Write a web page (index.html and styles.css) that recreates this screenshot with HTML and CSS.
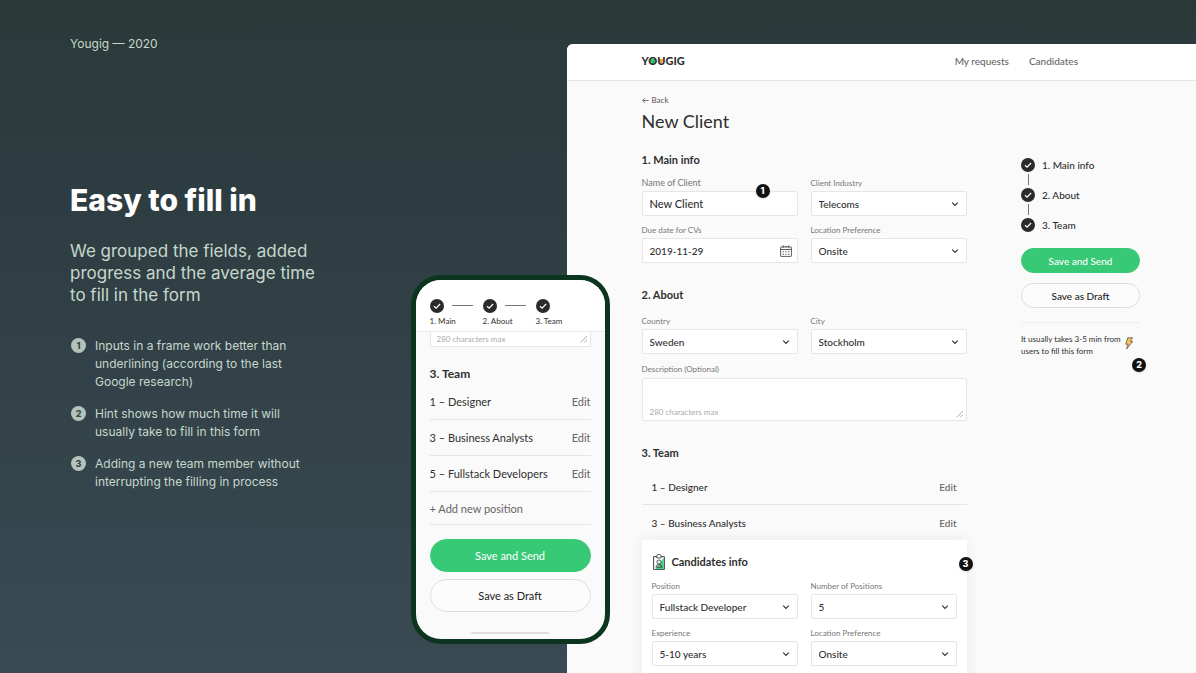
FILE: index.html
```html
<!DOCTYPE html>
<html lang="en">
<head>
<meta charset="utf-8">
<title>Yougig — Easy to fill in</title>
<link rel="stylesheet" href="styles.css">
</head>
<body>
<svg class="defs" aria-hidden="true">
  <symbol id="check" viewBox="0 0 14 14"><circle cx="7" cy="7" r="7" fill="#2b2b2b"/><path d="M4 7.2 6.1 9.2 10.1 5" fill="none" stroke="#fff" stroke-width="1.2"/></symbol>
  <symbol id="chevron" viewBox="0 0 8 8"><path d="M1.2 2.6 4 5.4 6.8 2.6" fill="none" stroke="#333" stroke-width="1.2"/></symbol>
  <symbol id="grip" viewBox="0 0 8 8"><path d="M.7 7.3 7 1M4.2 7.3 7 4.5" fill="none" stroke="#999" stroke-width=".8"/></symbol>
</svg>
<div class="stage">
  <section class="story">
    <p class="project">Yougig — 2020</p>
    <h1 class="headline">Easy to fill in</h1>
    <p class="lead">We grouped the fields, added<br>progress and the average time<br>to fill in the form</p>
    <ol class="notes">
      <li class="note"><span class="note-mark">1</span><span>Inputs in a frame work better than<br>underlining (according to the last<br>Google research)</span></li>
      <li class="note"><span class="note-mark">2</span><span>Hint shows how much time it will<br>usually take to fill in this form</span></li>
      <li class="note"><span class="note-mark">3</span><span>Adding a new team member without<br>interrupting the filling in process</span></li>
    </ol>
  </section>

  <div class="app">
    <header class="topbar">
      <div class="logo">Y<span class="logo-o">O</span><span class="logo-u">U</span>GIG</div>
      <nav class="nav"><a href="#requests">My requests</a><a href="#candidates">Candidates</a></nav>
    </header>
    <div class="columns">
      <main class="form">
        <a class="back" href="#back"><svg viewBox="0 0 8 8" width="7" height="7"><path d="M7.6 4H.8M3.6 1.2.8 4l2.8 2.8" fill="none" stroke="#555" stroke-width=".9"/></svg>Back</a>
        <h2 class="page-title">New Client</h2>

        <h3 class="section-title">1. Main info</h3>
        <div class="fields main-fields">
          <div class="field">
            <label class="label label-active" for="name">Name of Client</label>
            <input class="control control-active" id="name" type="text" value="New Client">
            <span class="badge badge-name">1</span>
          </div>
          <div class="field">
            <label class="label" for="industry">Client Industry</label>
            <div class="picker"><select class="control" id="industry"><option>Telecoms</option></select><svg class="chevron"><use href="#chevron"/></svg></div>
          </div>
          <div class="field">
            <label class="label" for="due">Due date for CVs</label>
            <div class="picker"><input class="control" id="due" type="text" value="2019-11-29">
              <svg class="calendar" viewBox="0 0 12 12"><path d="M1.2 1.9h9.6q.6 0 .6.6v8.300q0 .6-.6.6H1.200q-.6 0-.6-.6V2.500q0-.6.6-.6zM.6 4.500h10.800M3.200.4v2.400M8.800.4v2.400M6 .8v1.600" fill="none" stroke="#333" stroke-width=".8"/><path d="M2.600 6.800h7M2.600 9.200h7" fill="none" stroke="#333" stroke-width="1.100" stroke-dasharray="1.100 1.700"/></svg></div>
          </div>
          <div class="field">
            <label class="label" for="location">Location Preference</label>
            <div class="picker"><select class="control" id="location"><option>Onsite</option></select><svg class="chevron"><use href="#chevron"/></svg></div>
          </div>
        </div>

        <h3 class="section-title">2. About</h3>
        <div class="fields about-fields">
          <div class="field">
            <label class="label" for="country">Country</label>
            <div class="picker"><select class="control" id="country"><option>Sweden</option></select><svg class="chevron"><use href="#chevron"/></svg></div>
          </div>
          <div class="field">
            <label class="label" for="city">City</label>
            <div class="picker"><select class="control" id="city"><option>Stockholm</option></select><svg class="chevron"><use href="#chevron"/></svg></div>
          </div>
          <div class="field field-wide">
            <label class="label" for="description">Description (Optional)</label>
            <div class="picker"><textarea class="control area" id="description" placeholder="280 characters max"></textarea><svg class="grip"><use href="#grip"/></svg></div>
          </div>
        </div>

        <h3 class="section-title">3. Team</h3>
        <ul class="team">
          <li class="member"><span>1 – Designer</span><button class="edit" type="button">Edit</button></li>
          <li class="member"><span>3 – Business Analysts</span><button class="edit" type="button">Edit</button></li>
        </ul>
        <section class="card">
          <h4 class="card-title">
            <svg viewBox="0 0 12 16" width="12" height="16"><path d="M.6 2.600h10.800v12.800H.6z" fill="#fff" stroke="#444"/><path d="M10.900 3.500v11.400H2.500z" fill="#4fd08a"/><path d="M3.800 1.800Q4 .5 6 .5t2.200 1.300v2.100H3.800z" fill="#fff" stroke="#444" stroke-width=".9"/><circle cx="6" cy="8" r="2.100" fill="#dff5e8" stroke="#333" stroke-width=".8"/><path d="M2.800 13.200q.2-2.700 3.200-2.700t3.200 2.700z" fill="none" stroke="#333" stroke-width=".8"/></svg>
            Candidates info
          </h4>
          <span class="badge badge-card">3</span>
          <div class="fields">
            <div class="field">
              <label class="label" for="position">Position</label>
              <div class="picker"><select class="control" id="position"><option>Fullstack Developer</option></select><svg class="chevron"><use href="#chevron"/></svg></div>
            </div>
            <div class="field">
              <label class="label" for="count">Number of Positions</label>
              <div class="picker"><select class="control" id="count"><option>5</option></select><svg class="chevron"><use href="#chevron"/></svg></div>
            </div>
            <div class="field">
              <label class="label" for="experience">Experience</label>
              <div class="picker"><select class="control" id="experience"><option>5-10 years</option></select><svg class="chevron"><use href="#chevron"/></svg></div>
            </div>
            <div class="field">
              <label class="label" for="place">Location Preference</label>
              <div class="picker"><select class="control" id="place"><option>Onsite</option></select><svg class="chevron"><use href="#chevron"/></svg></div>
            </div>
          </div>
        </section>
      </main>

      <aside class="side">
        <ol class="steps">
          <li class="step"><svg class="check"><use href="#check"/></svg>1. Main info</li>
          <li class="step-line"></li>
          <li class="step"><svg class="check"><use href="#check"/></svg>2. About</li>
          <li class="step-line"></li>
          <li class="step"><svg class="check"><use href="#check"/></svg>3. Team</li>
        </ol>
        <button class="pill pill-primary" type="button">Save and Send</button>
        <button class="pill" type="button">Save as Draft</button>
        <div class="hint">
          <p>It usually takes 3-5 min from<br>users to fill this form</p>
          <svg viewBox="0 0 10 13" width="10" height="13"><path d="M3.800.8h4.700L6.500 4.600h2.100L2.600 12l1.500-4.800H1.700z" fill="#ffc04f" stroke="#555" stroke-width=".8" stroke-linejoin="round"/></svg>
          <span class="badge badge-hint">2</span>
        </div>
      </aside>
    </div>

    <div class="phone">
      <ol class="tabs">
        <li class="tab"><svg class="check"><use href="#check"/></svg>1. Main</li>
        <li class="tab"><svg class="check"><use href="#check"/></svg>2. About</li>
        <li class="tab"><svg class="check"><use href="#check"/></svg>3. Team</li>
      </ol>
      <div class="phone-body">
        <div class="area-end"><span>280 characters max</span><svg class="area-grip"><use href="#grip"/></svg></div>
        <h3 class="section-title phone-title">3. Team</h3>
        <ul class="phone-team">
          <li class="phone-member"><span>1 – Designer</span><button class="edit" type="button">Edit</button></li>
          <li class="phone-member"><span>3 – Business Analysts</span><button class="edit" type="button">Edit</button></li>
          <li class="phone-member"><span>5 – Fullstack Developers</span><button class="edit" type="button">Edit</button></li>
          <li class="phone-member phone-add"><button class="edit" type="button">+ Add new position</button></li>
        </ul>
        <button class="pill pill-phone pill-primary" type="button">Save and Send</button>
        <button class="pill pill-phone" type="button">Save as Draft</button>
        <div class="home-bar"></div>
      </div>
    </div>
  </div>
</div>
</body>
</html>
```
FILE: styles.css
```css
* { box-sizing: border-box; margin: 0; padding: 0; }
ol, ul { list-style: none; }
a { color: inherit; text-decoration: none; }
button, input, select, textarea { font: inherit; color: inherit; }
body { font-family: Lato, "Liberation Sans", sans-serif; font-weight: 500; color: #2f2f2f; font-size: 10px; }
.defs { position: absolute; width: 0; height: 0; }

.stage {
  display: grid;
  grid-template-columns: 90fr 100fr;
  height: 100vh;
  overflow: hidden;
  background: linear-gradient(#2a3938, #2d3c40 25%, #3a4a53);
}

/* Presentation copy */
.story { padding: 36px 0 0 70px; font-family: Inter, "Liberation Sans", sans-serif; font-weight: 400; color: #c6d8cd; }
.project { font-size: 12px; line-height: 16px; }
.headline { margin-top: 128px; font-size: 30px; line-height: 40px; font-weight: 800; color: #fff; }
.lead { margin-top: 20px; font-size: 17px; line-height: 22px; }
.notes { display: grid; gap: 14px; margin-top: 31px; }
.note { display: flex; gap: 9px; padding-left: 1px; font-size: 12px; line-height: 18px; }
.note-mark {
  width: 15px; height: 15px; margin-top: 1px;
  border-radius: 50%; background: #b3c3bb; color: #36464c;
  font-size: 9px; line-height: 15px; font-weight: 800; text-align: center;
}

/* Desktop window */
.app { position: relative; display: flex; flex-direction: column; margin-top: 44px; background: #fafafa; border-radius: 6px 0 0 0; }
.topbar {
  display: flex; justify-content: space-between; align-items: center;
  height: 37px; padding: 0 118px 2px 75px;
  background: #fff; border-bottom: 1px solid #e6e6e6; border-radius: 6px 0 0 0;
}
.logo { font-size: 11px; line-height: 16px; font-weight: 900; }
.logo-o { background: radial-gradient(circle at 50% 58%, #2fc873 3px, transparent 3px); }
.logo-u { background: radial-gradient(circle at 50% 52%, #f9a52b 2px, transparent 2px); }
.nav { display: flex; gap: 20px; font-size: 10px; color: #666; }

.columns { display: flex; justify-content: space-between; padding: 0 56px 0 75px; }
.form { flex: 0 1 325px; padding-top: 13px; }
.back { display: flex; align-items: center; gap: 3px; font-size: 8px; line-height: 12px; font-weight: 400; color: #555; }
.page-title { margin: 3px 0 19px; font-size: 18px; line-height: 24px; font-weight: 400; }
.section-title { font-size: 11px; line-height: 16px; font-weight: 700; }

.fields { display: grid; grid-template-columns: 1fr 1fr; gap: 8px 13px; }
.main-fields { margin: 9px 0 24px; }
.about-fields { row-gap: 9px; margin: 12px 0 24px; }
.field { position: relative; display: flex; flex-direction: column; gap: 2px; min-width: 0; }
.field-wide { grid-column: 1 / -1; gap: 3px; }
.label { font-size: 8px; line-height: 12px; font-weight: 400; color: #777; }
.label-active { font-size: 9px; }
.control {
  width: 100%; height: 25px; padding: 0 7px;
  border: 1px solid #e6e6e6; border-radius: 2px; background: #fff;
  font-size: 10px; outline: none; appearance: none;
}
.control-active { font-size: 11px; }
.area { display: block; height: 43px; padding-top: 26px; font-size: 8px; line-height: 14px; font-weight: 400; resize: none; overflow: hidden; }
.area::placeholder { color: #aaa; }
.picker { display: grid; align-items: center; }
.picker > * { grid-area: 1 / 1; }
.picker svg { justify-self: end; pointer-events: none; }
.chevron { width: 8px; height: 8px; margin-right: 8px; }
.calendar { width: 12px; height: 12px; margin-right: 6px; }
.grip { width: 8px; height: 8px; margin-right: 3px; align-self: end; margin-bottom: 3px; }

.team { margin-top: 8px; }
.member { display: flex; justify-content: space-between; align-items: center; height: 36px; padding: 0 10px; border-bottom: 1px solid #e6e6e6; }
.member:last-child { height: 35px; border-bottom: 0; }
.edit { border: 0; background: none; color: #666; }

.card { position: relative; padding: 14px 10px 30px; background: #fff; box-shadow: 0 0 14px rgba(0, 0, 0, .07); }
.card-title { display: flex; align-items: center; gap: 7px; margin-bottom: 10px; padding-left: 1px; font-size: 11px; line-height: 16px; font-weight: 700; }

.badge {
  position: absolute; width: 14px; height: 14px; border-radius: 50%;
  background: #111; color: #fff; font: 800 9px/14px Inter, sans-serif; text-align: center;
  box-shadow: 0 1px 2px rgba(0, 0, 0, .15);
}
.badge-name { top: 7px; right: 28px; }
.badge-card { top: 17px; right: -6px; }
.badge-hint { top: 35px; right: -6px; }

/* Progress column */
.side { flex: 0 0 119px; padding-top: 76px; }
.step { display: flex; align-items: center; gap: 7px; height: 16px; }
.check { width: 14px; height: 14px; flex: none; }
.step-line { width: 1px; height: 11px; margin: 1px 0 2px 7px; background: #777; }
.steps { margin-bottom: 15px; }
.pill { display: block; width: 100%; height: 25px; margin-bottom: 10px; border: 1px solid #dedede; border-radius: 20px; background: #fcfcfc; color: #222; }
.pill-primary { border-color: #38c976; background: #38c976; color: #fff; }
.hint { position: relative; display: flex; justify-content: space-between; margin-top: 14px; padding: 10px 6px 0 0; border-top: 1px solid #eee; font-size: 8px; line-height: 12px; font-weight: 400; }
.hint svg { margin-top: 4px; }

/* Phone preview laid over the window edge */
.phone {
  position: absolute; top: 231px; left: -156px; width: 199px;
  border: 5px solid #0c3520; border-radius: 30px; background: #fafafa; overflow: hidden;
  font-size: 11px; font-weight: 400;
}
.tabs { display: flex; height: 52px; padding: 19px 14px 0; background: #fff; border-bottom: 1px solid #e8e8e8; }
.tab { position: relative; flex: 0 0 53px; display: flex; flex-direction: column; gap: 2px; font-size: 8px; line-height: 12px; }
.tab:not(:last-child)::after { content: ""; position: absolute; top: 6px; left: 22px; width: 21px; height: 1px; background: #777; }
.phone-body { padding: 0 14px 5px; }
.area-end {
  display: flex; justify-content: space-between; align-items: center;
  height: 15px; padding: 0 2px 0 6px; border: 1px solid #e6e6e6; border-top: 0; background: #fff;
  font-size: 8px; color: #aaa;
}
.area-grip { width: 8px; height: 8px; }
.phone-title { margin: 19px 0 2px; font-size: 12px; }
.phone-member { display: flex; justify-content: space-between; align-items: center; height: 36px; border-bottom: 1px solid #e6e6e6; }
.phone-add { height: 33px; margin-bottom: 14px; }
.pill-phone { height: 33px; margin-bottom: 7px; }
.home-bar { width: 78px; height: 2px; margin: 20px auto 0; border-radius: 1px; background: #ddd; }
```
